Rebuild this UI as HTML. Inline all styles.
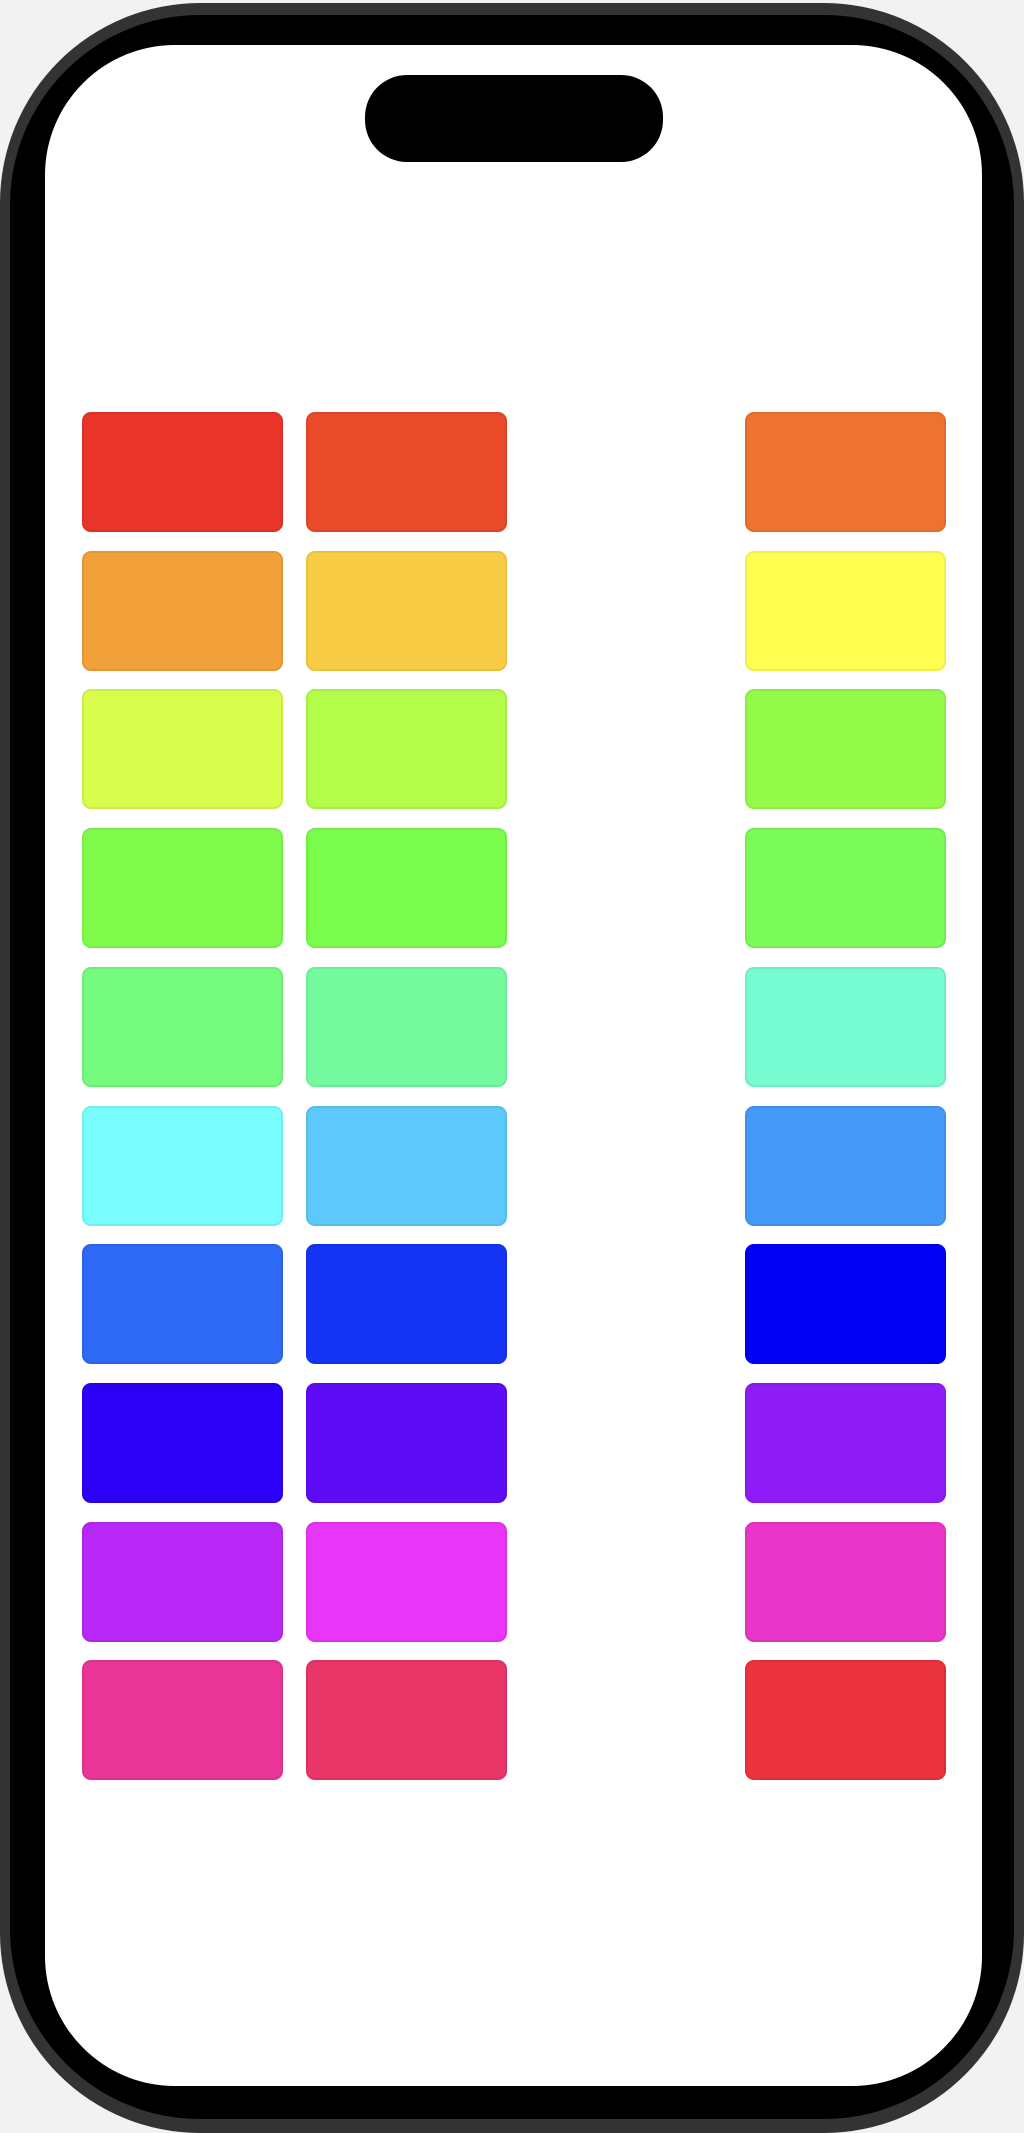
<!DOCTYPE html>
<html><head><meta charset="utf-8"><style>
html,body{margin:0;padding:0;}
body{width:1024px;height:2125px;background:#f2f2f2;position:relative;overflow:hidden;}
.outer{position:absolute;left:0;top:3px;width:1024px;height:2130px;border-radius:200px;background:#333;}
.bezel{position:absolute;left:10px;top:15px;width:1004px;height:2104px;border-radius:190px;background:#000;}
.screen{position:absolute;left:45px;top:45px;width:937px;height:2041px;border-radius:130px;background:#fff;}
.island{position:absolute;left:365px;top:75px;width:298px;height:87px;border-radius:42px;background:#000;}
.t{position:absolute;width:197px;height:116px;border-radius:9px;border:2px solid rgba(0,0,0,0.06);box-sizing:content-box;}
</style></head><body>
<div class="outer"></div>
<div class="bezel"></div>
<div class="screen"></div>
<div class="island"></div>
<div id="g"></div>
<script>
var c=[["#E9342A","#EA4B2A","#EE7230"],["#F2A03A","#F8CC44","#FFFD50"],["#D8FD4C","#B3FC4A","#95FB4A"],["#80FB4C","#79FC4B","#7AFB57"],["#75FB7E","#74FBA0","#77FBD0"],["#7AFDFE","#5DC8FA","#4599F8"],["#2D69F5","#1634F5","#0000F5"],["#2C00F5","#5E0CF5","#8F1CF6"],["#B928F7","#E935F7","#EA36C8"],["#E93696","#E93567","#EA333D"]];
var xs=[82,306,745],h="";
for(var r=0;r<10;r++)for(var k=0;k<3;k++){h+='<div class="t" style="left:'+xs[k]+'px;top:'+Math.round(412+r*138.7)+'px;background:'+c[r][k]+'"></div>';}
document.getElementById("g").innerHTML=h;
</script>
</body></html>
